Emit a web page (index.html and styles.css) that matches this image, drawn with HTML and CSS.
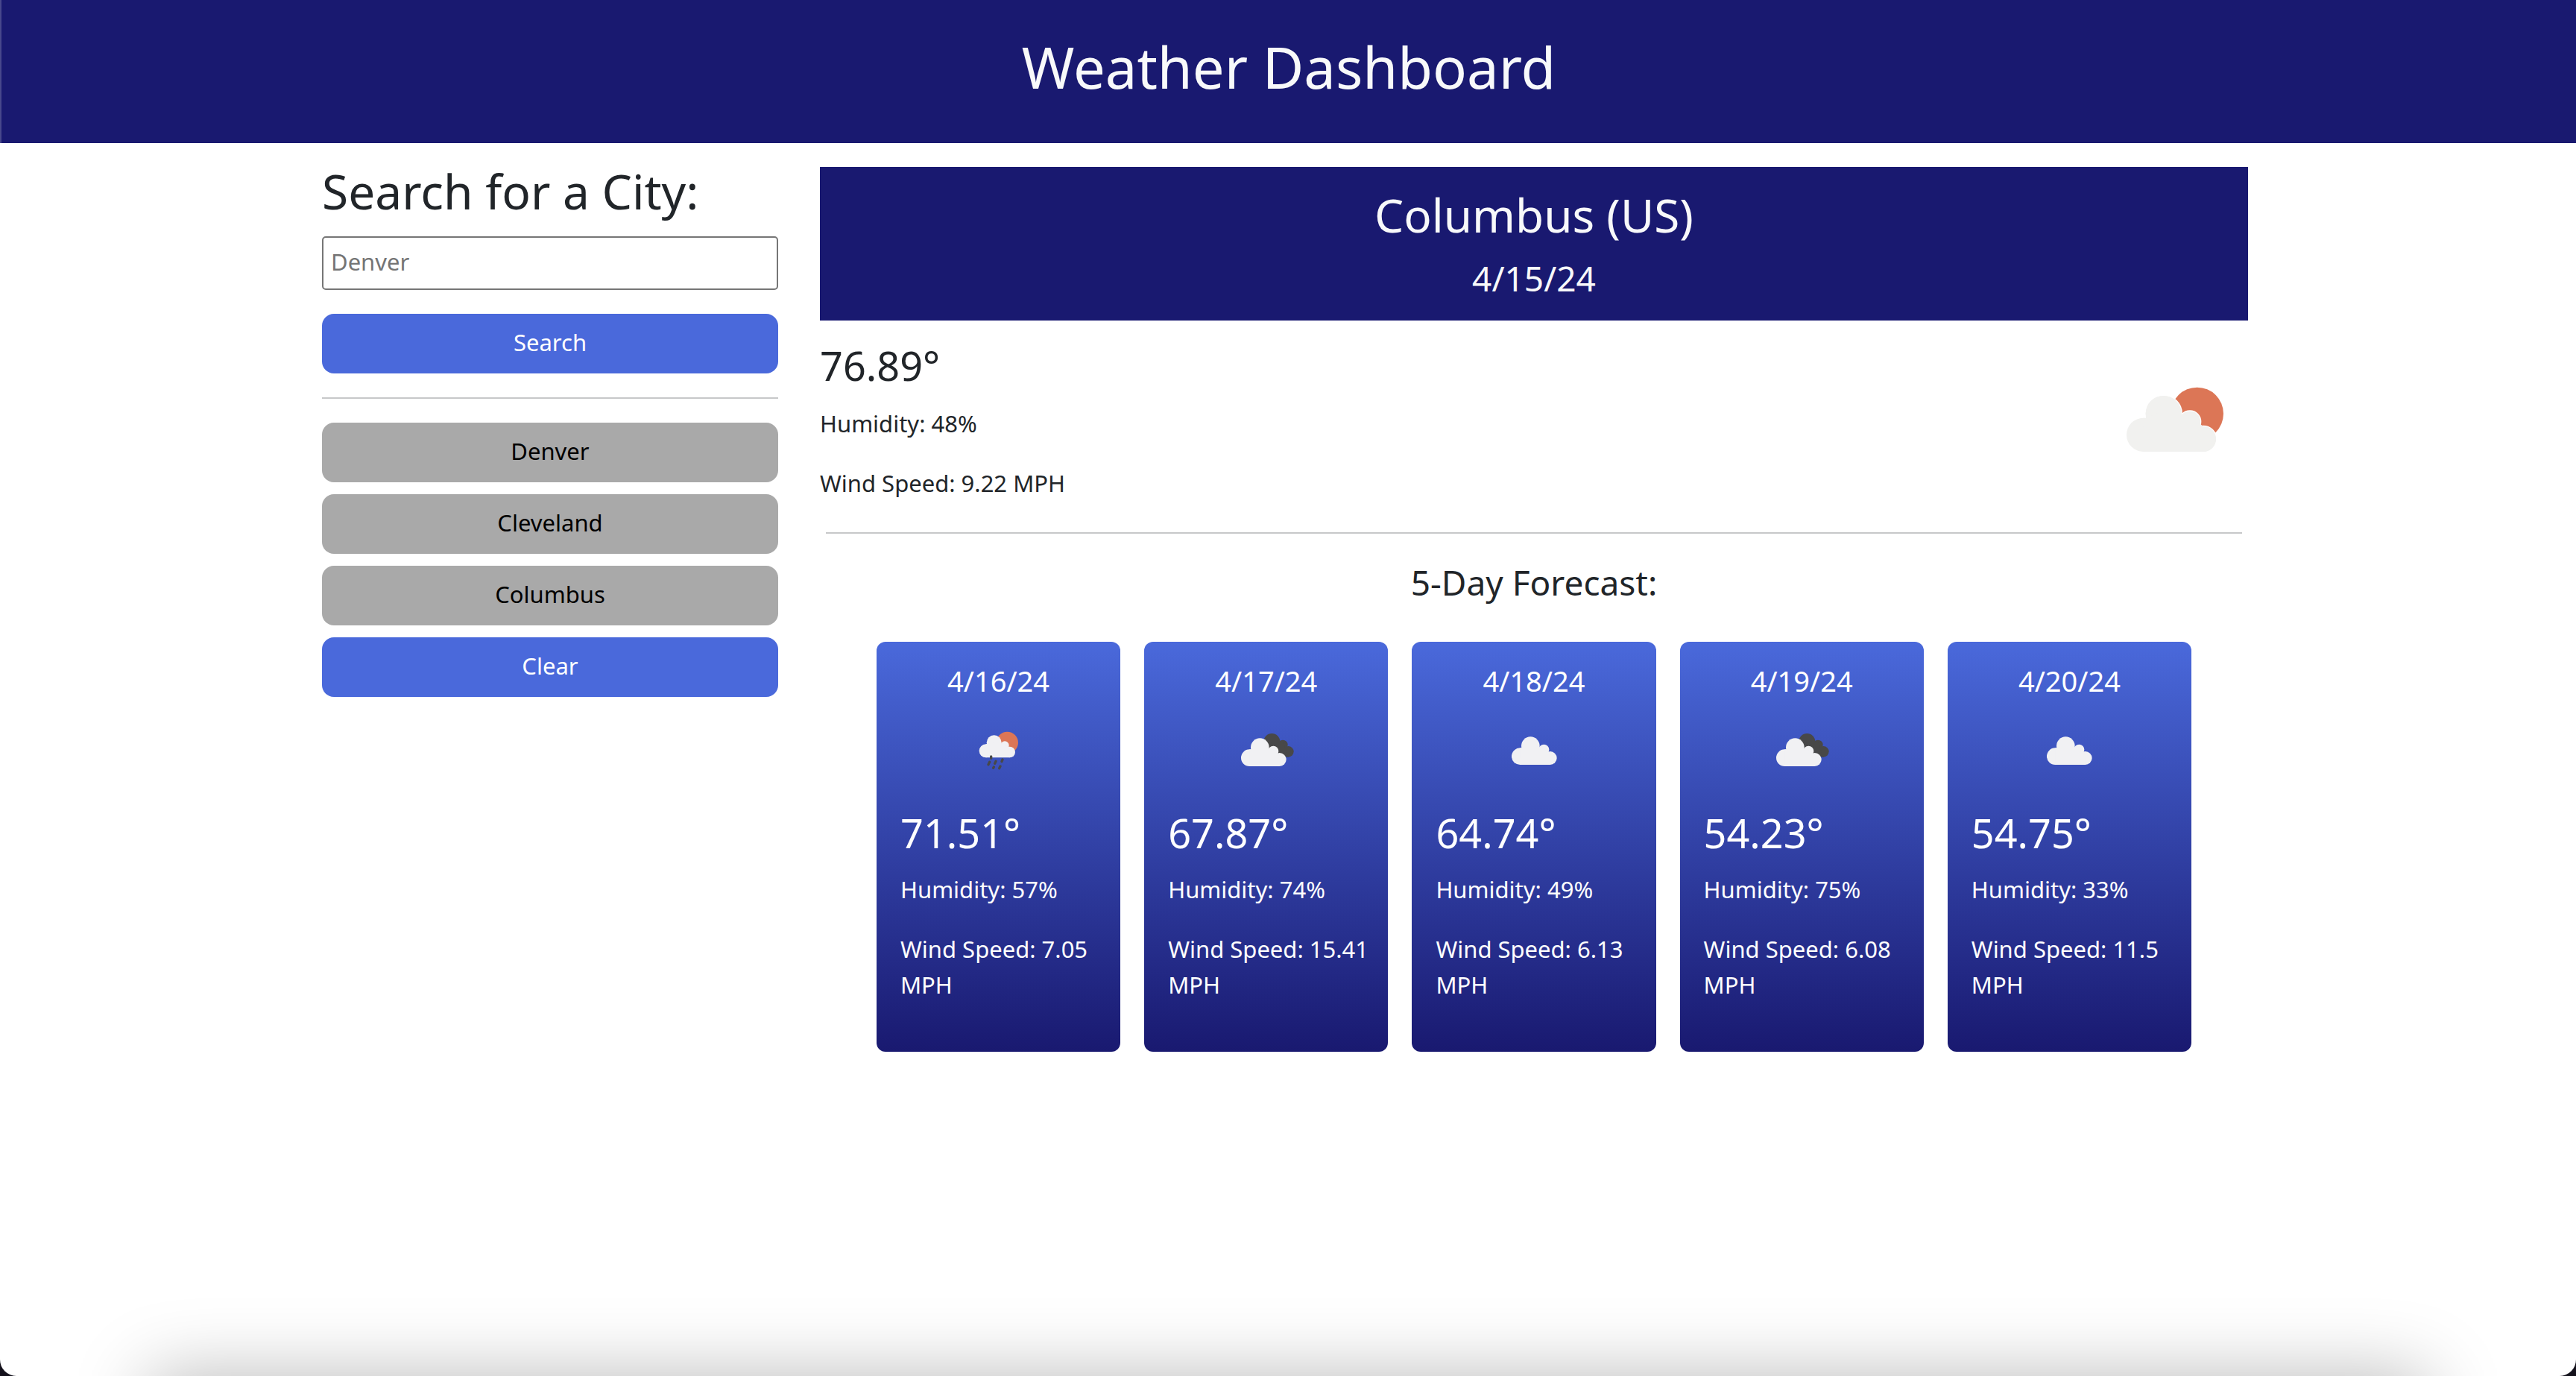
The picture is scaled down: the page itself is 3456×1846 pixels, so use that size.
FILE: index.html
```html
<!DOCTYPE html>
<html lang="en">
<head>
<meta charset="utf-8">
<meta name="viewport" content="width=device-width, initial-scale=1">
<title>Weather Dashboard</title>
<link rel="stylesheet" href="styles.css">
</head>
<body>
<svg class="sprite" aria-hidden="true">
  <symbol id="cloud" viewBox="0 0 360 270">
    <circle cx="108" cy="173" r="34"/><circle cx="150" cy="131" r="37"/><circle cx="204" cy="146" r="21"/><circle cx="229" cy="180" r="27"/><path d="M108 139h10l30-10 50 10 31 20v48H108z"/>
  </symbol>
</svg>
<header class="page-header"><h1>Weather Dashboard</h1></header>
<div class="layout">
  <aside class="sidebar">
    <form class="search">
      <h2><label for="city">Search for a City:</label></h2>
      <input id="city" class="search-input" type="text" placeholder="Denver">
      <button class="btn btn-primary" type="button">Search</button>
    </form>
    <hr class="rule">
    <div class="history">
      <button class="btn btn-city" type="button">Denver</button>
      <button class="btn btn-city" type="button">Cleveland</button>
      <button class="btn btn-city" type="button">Columbus</button>
      <button class="btn btn-primary" type="button">Clear</button>
    </div>
  </aside>
  <main class="content">
    <section class="banner">
      <h2>Columbus (US)</h2>
      <h3>4/15/24</h3>
    </section>
    <section class="current">
      <div>
        <p class="temp">76.89°</p>
        <p class="detail">Humidity: 48%</p>
        <p class="detail">Wind Speed: 9.22 MPH</p>
      </div>
      <svg class="current-icon" viewBox="45 105 600 300" aria-label="Few clouds" role="img">
        <circle cx="440" cy="225" r="106" fill="#dc7656"/>
        <g fill="#f1f1ef" stroke="#fff" stroke-width="8" paint-order="stroke"><circle cx="305" cy="225" r="72"/><circle cx="411" cy="257" r="42"/><circle cx="465" cy="327" r="51"/></g>
        <g fill="#f1f1ef"><circle cx="224" cy="310" r="68"/><circle cx="305" cy="225" r="72"/><circle cx="411" cy="257" r="42"/><circle cx="465" cy="327" r="51"/><path d="M224 242h10l70-30 74 15 40 10 47 40v101H224z"/></g>
      </svg>
    </section>
    <hr class="rule rule-inset">
    <section class="forecast">
      <h3>5-Day Forecast:</h3>
      <div class="cards">
        <article class="card">
          <h4>4/16/24</h4>
          <svg class="icon" viewBox="-2 0 360 270" role="img" aria-label="Rain">
            <circle cx="212" cy="112" r="44" fill="#dc7656"/>
            <g fill="#f1f1f3"><circle cx="126" cy="145" r="27"/><circle cx="159" cy="112" r="30"/><circle cx="202" cy="123" r="17"/><circle cx="222" cy="150" r="22"/><path d="M126 118l33-6 30 4 33 14v42h-96z"/></g>
            <path d="M147 168v7M141 190l-5 10M166 187l-4 9M193 180l-3 8M158 210l-2 4M184 207l-4 8" stroke="#484848" stroke-width="10" stroke-linecap="round"/>
          </svg>
          <p class="temp">71.51°</p>
          <p class="detail">Humidity: 57%</p>
          <p class="detail">Wind Speed: 7.05 MPH</p>
        </article>
        <article class="card">
          <h4>4/17/24</h4>
          <svg class="icon" viewBox="-4 0 360 270" role="img" aria-label="Broken clouds">
            <g fill="#484848"><circle cx="198" cy="108" r="33"/><circle cx="242" cy="121" r="20"/><circle cx="264" cy="148" r="22"/><path d="M198 108l44 0 22 62-30-4-50-40z"/></g>
            <use href="#cloud" fill="#f1f1f3" width="360" height="270"/>
          </svg>
          <p class="temp">67.87°</p>
          <p class="detail">Humidity: 74%</p>
          <p class="detail">Wind Speed: 15.41 MPH</p>
        </article>
        <article class="card">
          <h4>4/18/24</h4>
          <svg class="icon" viewBox="-16 6 360 270" role="img" aria-label="Clouds"><use href="#cloud" fill="#f1f1f3" width="360" height="270"/></svg>
          <p class="temp">64.74°</p>
          <p class="detail">Humidity: 49%</p>
          <p class="detail">Wind Speed: 6.13 MPH</p>
        </article>
        <article class="card">
          <h4>4/19/24</h4>
          <svg class="icon" viewBox="-4 0 360 270" role="img" aria-label="Broken clouds">
            <g fill="#484848"><circle cx="198" cy="108" r="33"/><circle cx="242" cy="121" r="20"/><circle cx="264" cy="148" r="22"/><path d="M198 108l44 0 22 62-30-4-50-40z"/></g>
            <use href="#cloud" fill="#f1f1f3" width="360" height="270"/>
          </svg>
          <p class="temp">54.23°</p>
          <p class="detail">Humidity: 75%</p>
          <p class="detail">Wind Speed: 6.08 MPH</p>
        </article>
        <article class="card">
          <h4>4/20/24</h4>
          <svg class="icon" viewBox="-16 6 360 270" role="img" aria-label="Clouds"><use href="#cloud" fill="#f1f1f3" width="360" height="270"/></svg>
          <p class="temp">54.75°</p>
          <p class="detail">Humidity: 33%</p>
          <p class="detail">Wind Speed: 11.5 MPH</p>
        </article>
      </div>
    </section>
  </main>
</div>
<div class="window-edge"></div>
</body>
</html>
```
FILE: styles.css
```css
* { box-sizing: border-box; }
html { background: #14121c; }
body {
  margin: 0;
  min-height: 100vh;
  position: relative;
  overflow: hidden;
  background: #fff;
  color: #212529;
  font: 400 31px/48px "Noto Sans", sans-serif;
  border-radius: 0 0 22px 22px;
}
h1, h2, h3, h4, p { margin: 0; font-weight: 400; }
.sprite { display: none; }

.page-header {
  padding: 42px 32px 54px;
  border-left: 2px solid #47478c;
  background: #191970;
  color: #f8f9fa;
  text-align: center;
}
h1 { font-size: 76px; line-height: 96px; }
h2 { font-size: 62px; line-height: 76px; }
h3 { font-size: 46px; line-height: 58px; }

.layout {
  display: grid;
  grid-template-columns: 612px 1fr;
  column-gap: 56px;
  max-width: 2640px;
  margin: 0 auto;
  padding: 32px 32px 0 24px;
}
.search { display: flex; flex-direction: column; }
.search h2 { font-size: 64px; line-height: 66px; }
.search-input {
  height: 72px;
  margin: 27px 0 32px;
  padding: 0 10px 4px;
  border: 2px solid #767676;
  border-radius: 5px;
  background: #fff;
  color: inherit;
  font: inherit;
}
.search-input::placeholder { color: #757575; opacity: 1; }
.btn {
  height: 80px;
  padding: 0 16px 4px;
  border: 0;
  border-radius: 16px;
  font: inherit;
}
.btn-primary { background: #4a69db; color: #fff; }
.btn-city { background: #a9a9a9; color: #000; }
.rule { margin: 32px 0; border: 0; border-top: 2px solid #c7c8c9; }
.history { display: flex; flex-direction: column; gap: 16px; }

.banner {
  padding: 26px 32px 28px;
  background: #191970;
  color: #f8f9fa;
  text-align: center;
}
.banner h3 { margin-top: 18px; }
.temp { margin-bottom: 22px; font-size: 54px; line-height: 64px; }
.detail { margin-bottom: 32px; }
.current { display: flex; justify-content: space-between; padding-top: 28px; }
.current-icon { width: 200px; height: 100px; margin-top: 57px; }
.rule-inset { margin: 10px 8px 36px; }

.forecast { text-align: center; }
.cards {
  display: grid;
  grid-template-columns: repeat(5, 1fr);
  gap: 32px;
  padding: 51px 76px 0;
}
.card {
  padding: 28px 32px 34px;
  border-radius: 12px;
  background: linear-gradient(#4a69db, #191970);
  color: #fff;
  text-align: left;
}
.card h4 { font-size: 38px; line-height: 48px; text-align: center; }
.icon { display: block; width: 120px; height: 90px; margin: 22px auto 36px; }
.card .temp { margin-bottom: 20px; }
.card .detail { margin-right: -8px; }

.window-edge {
  position: absolute;
  right: 300px;
  bottom: 0;
  left: 300px;
  height: 0;
  box-shadow: 0 100px 100px 100px rgba(0, 0, 0, .28);
}
```
